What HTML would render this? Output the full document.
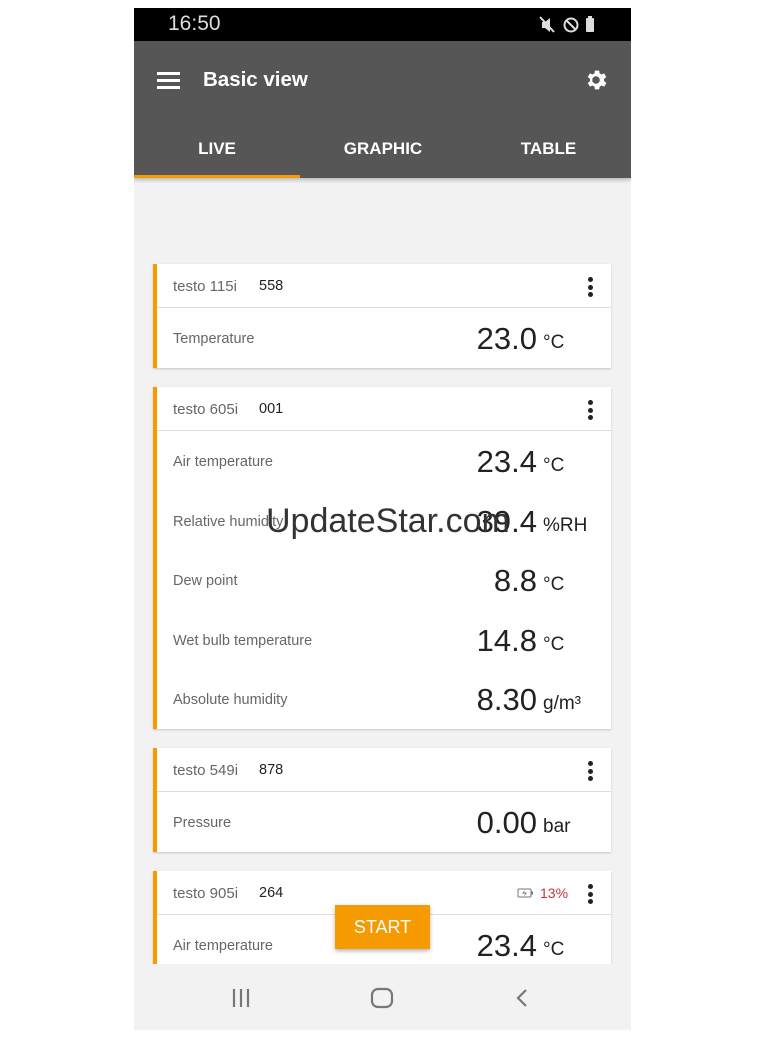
<!DOCTYPE html>
<html><head><meta charset="utf-8"><style>
*{margin:0;padding:0;box-sizing:border-box}
body{width:779px;height:1040px;background:#fff;font-family:"Liberation Sans",Roboto,sans-serif;position:relative;overflow:hidden}
.a{position:absolute}
.phone{left:134px;top:8px;width:497px;height:1022px;background:#f2f2f2;overflow:hidden}
.card{position:absolute;left:19px;width:458px;background:#fff;border-left:4px solid #f59a00;box-shadow:0 1px 2px rgba(0,0,0,.18)}
.hd{height:44px;border-bottom:1px solid #ddd;position:relative}
.nm{position:absolute;left:16px;top:14px;font-size:15px;color:#666}
.sn{position:absolute;left:102px;top:14px;font-size:14.5px;color:#222}
.dots{position:absolute;right:18px;top:13px;width:5px}
.dots i{display:block;width:5px;height:5px;border-radius:50%;background:#222;margin-bottom:2.5px}
.row{height:59.5px;position:relative}
.lb{position:absolute;left:16px;top:23px;font-size:14.5px;color:#666}
.v{position:absolute;right:74px;top:13px;font-size:31px;color:#222}
.u{position:absolute;left:386px;top:24px;font-size:19px;color:#222}
</style></head><body>
<div class="a phone">
 <div class="a" style="left:0;top:0;width:497px;height:33px;background:#000"></div>
 <div class="a" style="left:34px;top:4px;color:#ddd;font-size:21px">16:50</div>
 <svg class="a" style="left:404px;top:7px" width="66" height="20" viewBox="0 0 66 20">
  <path d="M4 7h3l5-4v14l-5-4H4z" fill="#ddd"/><path d="M2 2l14 15" stroke="#ddd" stroke-width="2"/>
  <circle cx="33" cy="10" r="6.5" fill="none" stroke="#ddd" stroke-width="2"/><path d="M28.5 5.5l9 9" stroke="#ddd" stroke-width="2"/>
  <rect x="48" y="3" width="8" height="14" rx="1" fill="#ddd"/><rect x="50" y="1" width="4" height="3" fill="#ddd"/>
 </svg>
 <div class="a" style="left:0;top:33px;width:497px;height:137px;background:#565656;box-shadow:0 2px 4px rgba(0,0,0,.25)"></div>
 <div class="a" style="left:23px;top:64px;width:23px;height:3px;background:#fff;box-shadow:0 7px 0 #fff,0 14px 0 #fff"></div>
 <div class="a" style="left:69px;top:60px;color:#fff;font-size:20.5px;font-weight:bold">Basic view</div>
 <svg class="a" style="left:449px;top:59px" width="26" height="26" viewBox="0 0 24 24"><path fill="#fff" d="M19.4 13a7.5 7.5 0 000-2l2.1-1.6-2-3.5-2.5 1a7 7 0 00-1.7-1L15 3.3h-4l-.4 2.6a7 7 0 00-1.7 1l-2.5-1-2 3.5L6.6 11a7.5 7.5 0 000 2l-2.200 1.6 2 3.5 2.5-1a7 7 0 001.7 1l.4 2.6h4l.4-2.6a7 7 0 001.7-1l2.5 1 2-3.5zM12 15.5a3.5 3.5 0 110-7 3.5 3.5 0 010 7z"/></svg>
 <div class="a" style="left:0;top:131px;width:166px;text-align:center;color:#fff;font-size:17px;font-weight:bold">LIVE</div>
 <div class="a" style="left:166px;top:131px;width:166px;text-align:center;color:#fff;font-size:17px;font-weight:bold">GRAPHIC</div>
 <div class="a" style="left:332px;top:131px;width:165px;text-align:center;color:#fff;font-size:17px;font-weight:bold">TABLE</div>
 <div class="a" style="left:0;top:167px;width:166px;height:3px;background:#f59a00"></div>

 <div class="card" style="top:256px;height:104px">
  <div class="hd"><span class="nm">testo 115i</span><span class="sn">558</span><div class="dots"><i></i><i></i><i></i></div></div>
  <div class="row"><span class="lb">Temperature</span><span class="v">23.0</span><span class="u">°C</span></div>
 </div>
 <div class="card" style="top:379px;height:342px">
  <div class="hd"><span class="nm">testo 605i</span><span class="sn">001</span><div class="dots"><i></i><i></i><i></i></div></div>
  <div class="row"><span class="lb">Air temperature</span><span class="v">23.4</span><span class="u">°C</span></div>
  <div class="row"><span class="lb">Relative humidity</span><span class="v">39.4</span><span class="u">%RH</span></div>
  <div class="row"><span class="lb">Dew point</span><span class="v">8.8</span><span class="u">°C</span></div>
  <div class="row"><span class="lb">Wet bulb temperature</span><span class="v">14.8</span><span class="u">°C</span></div>
  <div class="row"><span class="lb">Absolute humidity</span><span class="v">8.30</span><span class="u">g/m³</span></div>
 </div>
 <div class="card" style="top:740px;height:104px">
  <div class="hd"><span class="nm">testo 549i</span><span class="sn">878</span><div class="dots"><i></i><i></i><i></i></div></div>
  <div class="row"><span class="lb">Pressure</span><span class="v">0.00</span><span class="u">bar</span></div>
 </div>
 <div class="card" style="top:863px;height:120px">
  <div class="hd"><span class="nm">testo 905i</span><span class="sn">264</span>
   <svg class="a" style="left:360px;top:17px" width="17" height="10" viewBox="0 0 17 10"><rect x="1" y="1" width="13" height="8" rx="1" fill="none" stroke="#777"/><rect x="14" y="3.5" width="2" height="3" fill="#777"/><path d="M8 2l-3 3.5h3l-1 3 3-4H7z" fill="#777"/></svg>
   <span class="a" style="left:383px;top:14px;font-size:14px;color:#c8323c">13%</span>
   <div class="dots"><i></i><i></i><i></i></div></div>
  <div class="row"><span class="lb">Air temperature</span><span class="v">23.4</span><span class="u">°C</span></div>
 </div>
 <div class="a" style="left:201px;top:897px;width:95px;height:44px;background:#f59a00;color:#fff;font-size:18px;text-align:center;line-height:44px;box-shadow:0 2px 4px rgba(0,0,0,.3)">START</div>
 <div class="a" style="left:132px;top:494px;font-size:34px;color:#333">UpdateStar.com</div>
 <div class="a" style="left:0;top:956px;width:497px;height:66px;background:#f2f2f2"></div>
 <svg class="a" style="left:96px;top:978px" width="310" height="24" viewBox="0 0 310 24">
  <path d="M4 3v18M11 3v18M18 3v18" stroke="#777" stroke-width="2.2"/>
  <rect x="142" y="3" width="20" height="18" rx="6" fill="none" stroke="#777" stroke-width="2.2"/>
  <path d="M296 4l-8 8 8 8" fill="none" stroke="#777" stroke-width="2.2"/>
 </svg>
</div>
</body></html>
